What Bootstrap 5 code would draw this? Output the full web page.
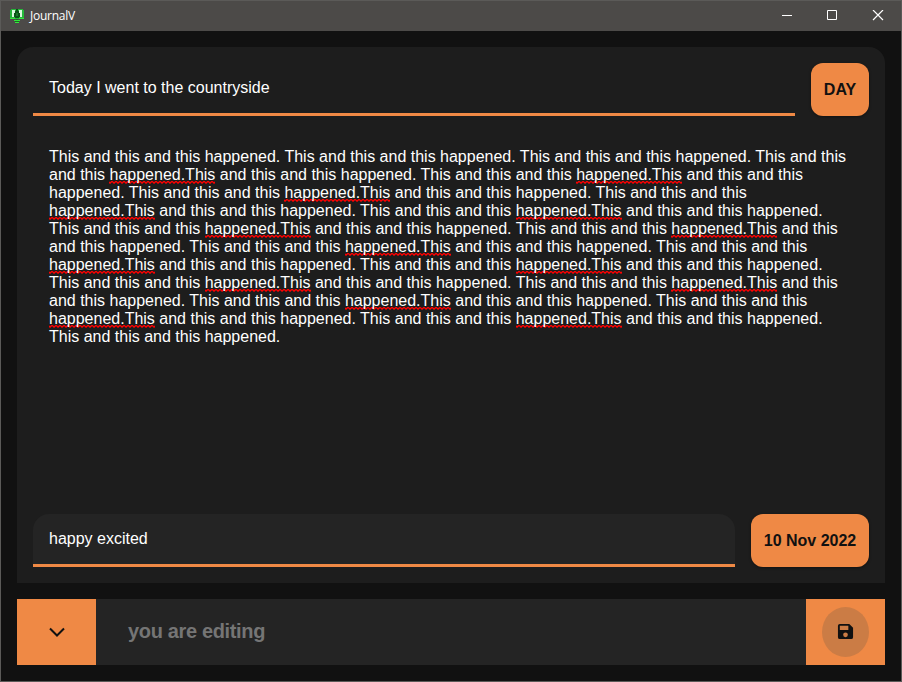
<!DOCTYPE html>
<html lang="en">
<head>
<meta charset="utf-8">
<meta name="viewport" content="width=device-width, initial-scale=1">
<title>JournalV</title>
<link href="https://cdn.jsdelivr.net/npm/bootstrap@5.3.0/dist/css/bootstrap.min.css" rel="stylesheet">
<style>
:root { --accent: #ef8945; --ink: #111; --panel: #1d1d1d; --field: #242424; }
body { font-family: "Liberation Sans", Arial, sans-serif; font-size: 16px; line-height: 18px; color: #fff; background: var(--ink); }
.app-window { height: 682px; border: 1px solid #5b5a58; background: var(--ink); }
.titlebar { height: 30px; background: #4c4a48; padding-left: 8px; }
.app-name { font: 12px/16px "Open Sans", "Noto Sans", sans-serif; letter-spacing: -.25px; margin-left: 5px; }
.win-btn { width: 46px; height: 30px; }
.journal { background: var(--panel); border-radius: 16px 16px 0 0; }
.entry-field { height: 53px; border-bottom: 3px solid var(--accent); padding: 0 16px; }
.tag-field { background: var(--field); border-radius: 16px 16px 0 0; }
.pill { height: 53px; border-radius: 12px; background: var(--accent); color: var(--ink); font-weight: 700; box-shadow: 0 1px 3px rgba(0,0,0,.4); }
.pill-day { width: 58px; }
.pill-date { width: 118px; }
.entry-text { padding: 32px 16px 0; white-space: pre; }
.typo { padding-bottom: 1px; background: url("data:image/svg+xml,%3Csvg xmlns='http://www.w3.org/2000/svg' width='4' height='3'%3E%3Cpath d='M-1 .2L1 2.200L3 .2L5 2.200' fill='none' stroke='%23ff0000' stroke-width='1.3'/%3E%3C/svg%3E") 0 100% / 4px 3px repeat-x; }
.status-bar { height: 66px; background: var(--field); }
.bar-btn { width: 79px; background: var(--accent); color: var(--ink); }
.status-text { padding-left: 32px; padding-bottom: 2px; font-size: 20px; letter-spacing: -.35px; line-height: 24px; font-weight: 700; color: #757575; }
.save-disc { width: 47px; height: 50px; border-radius: 50%; background: #cb7c45; padding-bottom: 1px; }
</style>
</head>
<body>
<div class="app-window d-flex flex-column">
  <header class="titlebar d-flex align-items-center flex-shrink-0">
    <svg width="16" height="16" viewBox="0 0 16 16" shape-rendering="crispEdges">
      <path d="M2 1h12v1h1v9H1V2h1z" fill="#25b83a"/><path d="M3 2h3v7H3zM10 2h3v7h-3z" fill="#d8f8dc"/>
      <path d="M7 1h2v2h1v2h1v4h-1v1H6V9H5V5h1V3h1z" fill="#0b5418"/>
      <path d="M7 5h2v3H7z" fill="#177a29"/><path d="M1 10h5v1H1zM10 10h5v1h-5zM5 12h6v1H5zM6 14h4v1H6z" fill="#35e53c"/>
      <path d="M7 11h2v1H7zM6 13h4v1H6z" fill="#146f20"/>
    </svg>
    <span class="app-name flex-grow-1">JournalV</span>
    <span class="win-btn d-flex align-items-center justify-content-center"><svg width="12" height="12" viewBox="0 0 12 12"><path d="M2 5.500h10" stroke="#fff"/></svg></span>
    <span class="win-btn d-flex align-items-center justify-content-center"><svg width="12" height="12" viewBox="0 0 12 12"><path d="M1.500 .500h9v9h-9z" fill="none" stroke="#fff"/></svg></span>
    <span class="win-btn d-flex align-items-center justify-content-center"><svg width="12" height="12" viewBox="0 0 12 12"><path d="M1 0l10 10M11 0L1 10" stroke="#fff" stroke-width="1.2"/></svg></span>
  </header>
  <main class="d-flex flex-column flex-grow-1 gap-3 p-3">
    <section class="journal d-flex flex-column flex-grow-1 p-3">
      <div class="d-flex gap-3">
        <div class="entry-field d-flex align-items-center flex-grow-1">Today I went to the countryside</div>
        <button class="pill pill-day border-0 p-0">DAY</button>
      </div>
      <div class="entry-text flex-grow-1">This and this and this happened. This and this and this happened. This and this and this happened. This and this
and this <span class="typo">happened.This</span> and this and this happened. This and this and this <span class="typo">happened.This</span> and this and this
happened. This and this and this <span class="typo">happened.This</span> and this and this happened. This and this and this
<span class="typo">happened.This</span> and this and this happened. This and this and this <span class="typo">happened.This</span> and this and this happened.
This and this and this <span class="typo">happened.This</span> and this and this happened. This and this and this <span class="typo">happened.This</span> and this
and this happened. This and this and this <span class="typo">happened.This</span> and this and this happened. This and this and this
<span class="typo">happened.This</span> and this and this happened. This and this and this <span class="typo">happened.This</span> and this and this happened.
This and this and this <span class="typo">happened.This</span> and this and this happened. This and this and this <span class="typo">happened.This</span> and this
and this happened. This and this and this <span class="typo">happened.This</span> and this and this happened. This and this and this
<span class="typo">happened.This</span> and this and this happened. This and this and this <span class="typo">happened.This</span> and this and this happened.
This and this and this happened.</div>
      <div class="d-flex gap-3">
        <div class="entry-field tag-field d-flex align-items-center flex-grow-1">happy excited</div>
        <button class="pill pill-date border-0 p-0">10 Nov 2022</button>
      </div>
    </section>
    <footer class="status-bar d-flex flex-shrink-0">
      <button class="bar-btn border-0 p-0 d-flex align-items-center justify-content-center" aria-label="Collapse">
        <svg width="18" height="12" viewBox="0 0 18 12"><path d="M2 2.500l7 7 7-7" fill="none" stroke="currentColor" stroke-width="2"/></svg>
      </button>
      <div class="status-text d-flex align-items-center flex-grow-1">you are editing</div>
      <button class="bar-btn border-0 p-0 d-flex align-items-center justify-content-center" aria-label="Save">
        <span class="save-disc d-flex align-items-center justify-content-center">
          <svg width="17" height="17" viewBox="0 0 17 18"><path fill="currentColor" fill-rule="evenodd" d="M2.500 1h10l4 4v10a2 2 0 0 1-2 2h-12a2 2 0 0 1-2-2V3a2 2 0 0 1 2-2zM2.500 3v4.500h9V3zM8.500 10a2.500 2.500 0 1 0 0 5 2.500 2.500 0 0 0 0-5z"/></svg>
        </span>
      </button>
    </footer>
  </main>
</div>
<script src="https://cdn.jsdelivr.net/npm/bootstrap@5.3.0/dist/js/bootstrap.bundle.min.js"></script>
</body>
</html>
